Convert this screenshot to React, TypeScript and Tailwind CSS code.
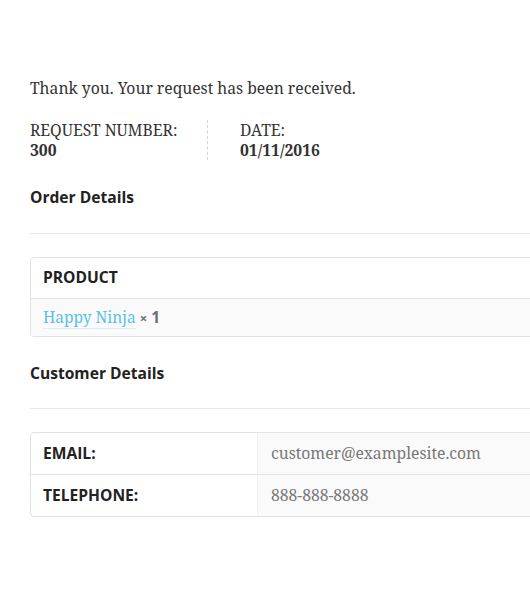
const serif = "font-['Noto_Serif','DejaVu_Serif',serif]";
const sans = "font-['Open_Sans','Noto_Sans',sans-serif]";

const OrderReceived = () => {
  return (
    <div className="w-[530px] h-[591px] overflow-hidden bg-white">
      <div className="w-[600px] pl-[30px] pt-[76px]">
        {/* Thank you note */}
        <p className={`${serif} text-[15.7px] leading-[24px] text-[#333]`}>
          Thank you. Your request has been received.
        </p>

        {/* Overview */}
        <ul className={`${serif} mt-[20px] flex text-[15.7px] leading-[20px] text-[#333]`}>
          <li className="w-[178px] border-r border-dashed border-[#d4d4d4] pr-4">
            REQUEST NUMBER:
            <strong className="block font-bold">300</strong>
          </li>
          <li className="pl-[32px]">
            DATE:
            <strong className="block font-bold">01/11/2016</strong>
          </li>
        </ul>

        {/* Order details */}
        <h2 className={`${sans} mt-[25px] text-[15.6px] font-bold leading-[24px] text-[#222]`}>
          Order Details
        </h2>
        <div className="mt-[24px] h-px bg-[#e6e6e6]" />

        <div className="mt-[23px] overflow-hidden rounded-[4px] border border-[#e3e3e3]">
          <div className={`${sans} flex h-[41px] items-center border-b border-[#e3e3e3] px-[12px] text-[15.6px] font-bold text-[#222]`}>
            PRODUCT
          </div>
          <div className="flex h-[37px] items-center bg-[#fafafa] px-[12px]">
            <a className={`${serif} text-[15.5px] text-[#5bc0eb] underline decoration-[#d6eefa] underline-offset-[5px]`}>
              Happy Ninja
            </a>
            <span className={`${sans} ml-[4px] text-[15.6px] font-bold text-[#6f6f6f]`}>
              <span className="text-[13px]">×</span> 1
            </span>
          </div>
        </div>

        {/* Customer details */}
        <h2 className={`${sans} mt-[24px] text-[15.6px] font-bold leading-[24px] text-[#222]`}>
          Customer Details
        </h2>
        <div className="mt-[23px] h-px bg-[#e6e6e6]" />

        <div className="mt-[23px] overflow-hidden rounded-[4px] border border-[#e3e3e3]">
          <div className="flex h-[42px] border-b border-[#e3e3e3]">
            <div className={`${sans} flex w-[226px] items-center px-[12px] text-[15.6px] font-bold text-[#222]`}>
              EMAIL:
            </div>
            <div className={`${serif} flex flex-1 items-center border-l border-[#f2f2f2] bg-[#fafafa] px-[13px] text-[15.7px] text-[#777]`}>
              customer@examplesite.com
            </div>
          </div>
          <div className="flex h-[41px]">
            <div className={`${sans} flex w-[226px] items-center px-[12px] text-[15.6px] font-bold text-[#222]`}>
              TELEPHONE:
            </div>
            <div className={`${serif} flex flex-1 items-center border-l border-[#f2f2f2] bg-[#fafafa] px-[13px] text-[15.7px] text-[#777]`}>
              888-888-8888
            </div>
          </div>
        </div>
      </div>
    </div>
  );
};

export default function App() {
  return <OrderReceived />;
}
